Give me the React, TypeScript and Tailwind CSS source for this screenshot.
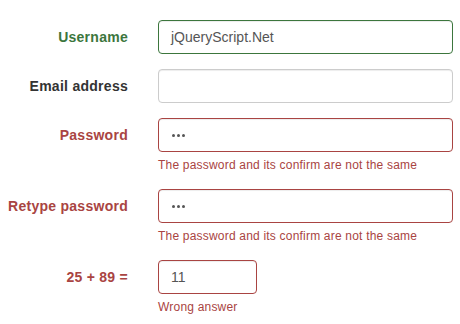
import React from "react";

const font = { fontFamily: '"Liberation Sans", Arial, sans-serif' };

type State = "success" | "error" | "none";

function Dots() {
  return (
    <span className="flex gap-[2px] ml-[1px]">
      <span className="w-[3px] h-[3px] rounded-full bg-[#555555]" />
      <span className="w-[3px] h-[3px] rounded-full bg-[#555555]" />
      <span className="w-[3px] h-[3px] rounded-full bg-[#555555]" />
    </span>
  );
}

function Row({
  label,
  state,
  value,
  password,
  help,
  narrow,
}: {
  label: string;
  state: State;
  value?: string;
  password?: boolean;
  help?: string;
  narrow?: boolean;
}) {
  const labelColor =
    state === "success" ? "text-[#3c763d]" : state === "error" ? "text-[#a94442]" : "text-[#333333]";
  const borderColor =
    state === "success" ? "border-[#3c763d]" : state === "error" ? "border-[#a94442]" : "border-[#cccccc]";
  return (
    <div className="flex mb-[15px]">
      <label
        className={`w-[128px] shrink-0 text-right pt-[7px] text-[14px] leading-[20px] font-bold tracking-[0.27px] ${labelColor}`}
      >
        {label}
      </label>
      <div className="ml-[30px] flex-1">
        <div
          className={`h-[34px] ${narrow ? "w-[99px]" : "w-full"} rounded-[4px] border ${borderColor} bg-white px-[12px] flex items-center text-[14px] text-[#555555] shadow-[inset_0_1px_1px_rgba(0,0,0,0.075)]`}
        >
          {password ? <Dots /> : value}
        </div>
        {help && (
          <div className="mt-[5px] text-[12px] leading-[17px] tracking-[0.2px] text-[#a94442]">{help}</div>
        )}
      </div>
    </div>
  );
}

export default function App() {
  return (
    <div className="w-[460px] h-[324px] bg-white overflow-hidden pt-[20px] pr-[7px]" style={font}>
      <Row label="Username" state="success" value="jQueryScript.Net" />
      <Row label="Email address" state="none" />
      <Row label="Password" state="error" password help="The password and its confirm are not the same" />
      <Row label="Retype password" state="error" password help="The password and its confirm are not the same" />
      <Row label="25 + 89 =" state="error" value="11" narrow help="Wrong answer" />
    </div>
  );
}
